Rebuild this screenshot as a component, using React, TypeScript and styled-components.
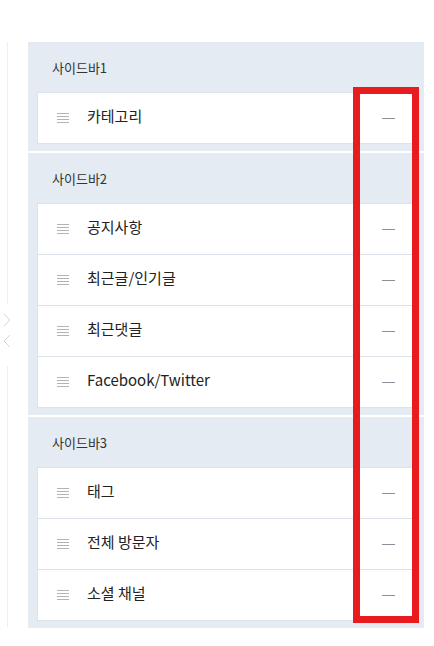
import React from "react";
import styled, { createGlobalStyle } from "styled-components";

const GlobalStyle = createGlobalStyle`
  html, body {
    margin: 0;
    padding: 0;
    background: #ffffff;
    font-family: "Noto Sans CJK KR", "Noto Sans", sans-serif;
  }
`;

type Group = { title: string; items: string[] };

const groups: Group[] = [
  { title: "사이드바1", items: ["카테고리"] },
  { title: "사이드바2", items: ["공지사항", "최근글/인기글", "최근댓글", "Facebook/Twitter"] },
  { title: "사이드바3", items: ["태그", "전체 방문자", "소셜 채널"] },
];

const App: React.FC = () => {
  return (
    <>
      <GlobalStyle />
      <Page>
        <Rail>
          <RailLine $len={262} />
          <Chevrons>
            <svg width="8" height="14" viewBox="0 0 8 14">
              <path d="M1 1l6 6-6 6" fill="none" stroke="#cfd6de" strokeWidth="1" />
            </svg>
            <svg width="8" height="14" viewBox="0 0 8 14">
              <path d="M7 1L1 7l6 6" fill="none" stroke="#cfd6de" strokeWidth="1" />
            </svg>
          </Chevrons>
          <RailLine $len={261} />
        </Rail>
        <Column>
          {groups.map((g) => (
            <Panel key={g.title}>
              <PanelHeader>{g.title}</PanelHeader>
              <List>
                {g.items.map((it) => (
                  <Row key={it}>
                    <Handle>
                      <span />
                      <span />
                      <span />
                      <span />
                    </Handle>
                    <Label>{it}</Label>
                    <Dash />
                  </Row>
                ))}
              </List>
            </Panel>
          ))}
        </Column>
        <Highlight />
      </Page>
    </>
  );
};

const Page = styled.div`
  position: relative;
  width: 434px;
  height: 646px;
  display: flex;
  align-items: flex-start;
`;

const Rail = styled.div`
  width: 28px;
  padding-top: 42px;
  display: flex;
  flex-direction: column;
  align-items: flex-start;
`;

const RailLine = styled.div<{ $len: number }>`
  margin-left: 7px;
  width: 1px;
  height: ${(p) => p.$len}px;
  background: #eceff3;
`;

const Chevrons = styled.div`
  display: flex;
  flex-direction: column;
  gap: 7px;
  padding: 9px 0 18px 3px;

  svg {
    display: block;
  }
`;

const Column = styled.div`
  width: 396px;
  padding-top: 42px;
  display: flex;
  flex-direction: column;
  gap: 2px;
`;

const Panel = styled.div`
  background: #e5ebf2;
  padding: 0 9px 7px;
`;

const PanelHeader = styled.div`
  height: 50px;
  display: flex;
  align-items: center;
  padding-left: 15px;
  font-size: 13px;
  color: #333;
`;

const List = styled.div`
  background: #fff;
  border: 1px solid #dde3ea;
  border-top: none;
`;

const Row = styled.div`
  height: 50px;
  display: flex;
  align-items: center;
  padding: 0 19px;
  border-top: 1px solid #dde3ea;
`;

const Handle = styled.div`
  width: 12px;
  display: flex;
  flex-direction: column;
  gap: 2px;

  span {
    display: block;
    height: 1px;
    background: #b0b4ba;
  }
`;

const Label = styled.div`
  flex: 1;
  margin-left: 18px;
  padding-bottom: 4px;
  font-size: 15px;
  line-height: 20px;
  color: #222;
`;

const Dash = styled.div`
  width: 13px;
  height: 1px;
  background: #8b9099;
`;

const Highlight = styled.div`
  position: absolute;
  left: 353px;
  top: 87px;
  width: 66px;
  height: 536px;
  box-sizing: border-box;
  border: 7px solid #e81c1f;
`;

export default App;
